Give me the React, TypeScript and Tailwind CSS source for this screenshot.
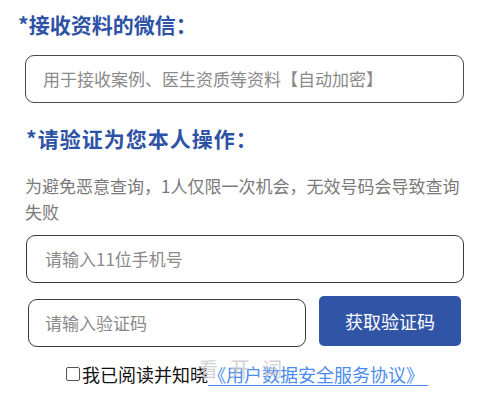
import React from 'react';

const FONT = { fontFamily: '"PingFang SC", "Noto Sans CJK SC", "Noto Sans", sans-serif' };

export default function App() {
  return (
    <div className="relative w-[480px] h-[399px] overflow-hidden bg-white" style={FONT}>
      {/* 微信 */}
      <div className="pt-[9px] pl-[18px] text-[21px] leading-[30px] font-bold text-[#2d52a6]">
        *接收资料的微信：
      </div>
      <div className="mt-[16px] ml-[25px] w-[439px] h-[48px] rounded-[9px] border-[1.5px] border-[#4a4a4a] flex items-center pl-[17px] text-[17px] text-[#8a8a8a]">
        用于接收案例、医生资质等资料【自动加密】
      </div>

      {/* 验证 */}
      <div className="mt-[20px] pl-[26px] text-[21px] leading-[30px] font-bold text-[#2d52a6] tracking-[1px]">
        *请验证为您本人操作：
      </div>
      <p className="mt-[20px] pl-[25px] pr-[14px] text-[17px] leading-[26px] text-[#7a7a7a]">
        为避免恶意查询，1人仅限一次机会，无效号码会导致查询失败
      </p>

      <div className="mt-[10px] ml-[26px] w-[438px] h-[48px] rounded-[9px] border-[1.5px] border-[#3a3a3a] flex items-center pl-[18px] text-[17px] text-[#8a8a8a]">
        请输入11位手机号
      </div>

      <div className="mt-[12px] ml-[28px] flex items-center gap-[13px]">
        <div className="w-[278px] h-[48px] mt-[4px] rounded-[9px] border-[1.5px] border-[#3a3a3a] flex items-center pl-[16px] text-[17px] text-[#8a8a8a]">
          请输入验证码
        </div>
        <button className="w-[142px] h-[50px] rounded-[5px] bg-[#3155a6] text-white text-[18px]">
          获取验证码
        </button>
      </div>

      <div className="mt-[15px] flex items-center justify-center pl-[14px] text-[18px] leading-[24px]">
        <span className="inline-block w-[14px] h-[14px] mr-[2px] rounded-[2px] border border-[#555] bg-white" />
        <span className="text-[#111]">我已阅读并知晓</span>
        <span className="text-[#4b8bf2] underline underline-offset-[3px] whitespace-pre">《用户数据安全服务协议》 </span>
      </div>

      {/* 水印 */}
      <div className="absolute left-[198px] top-[356px] text-[20px] leading-[26px] tracking-[12px] text-[#c8c8c8] opacity-80 pointer-events-none">
        看开词
      </div>
    </div>
  );
}
